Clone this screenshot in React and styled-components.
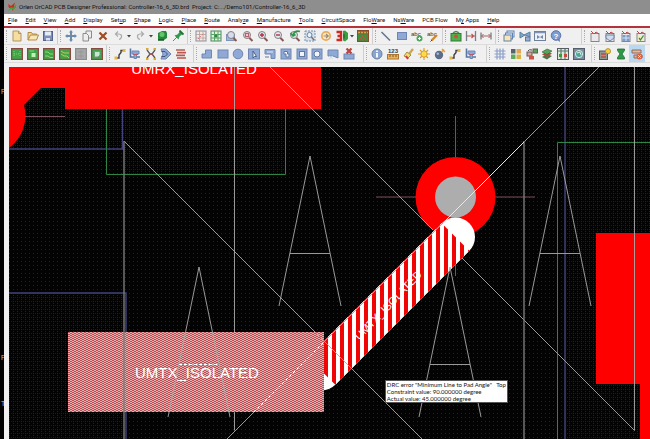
import styled, { createGlobalStyle, css } from "styled-components";

const GlobalStyle = createGlobalStyle`
  * {
    box-sizing: border-box;
  }

  body {
    margin: 0;
    background: #000;
    font-family: Roboto, "Open Sans", sans-serif;
  }
`;

const menus = [
  ["", "F", "ile"],
  ["", "E", "dit"],
  ["", "V", "iew"],
  ["", "A", "dd"],
  ["", "D", "isplay"],
  ["Set", "u", "p"],
  ["", "S", "hape"],
  ["", "L", "ogic"],
  ["", "P", "lace"],
  ["", "R", "oute"],
  ["Analy", "z", "e"],
  ["", "M", "anufacture"],
  ["", "T", "ools"],
  ["", "C", "ircuitSpace"],
  ["Flo", "W", "are"],
  ["Ns", "W", "are"],
  ["PCB Flow", "", ""],
  ["M", "y", " Apps"],
  ["", "H", "elp"],
];

// Icon building blocks, all drawn on a 12x12 grid
const Lens = ({ tint = "#dfe6ee", children }) => (
  <>
    <path d="M7 7.5 L10.5 11" stroke="#8a5a52" strokeWidth="2" />
    <circle cx="5" cy="5" r="3.5" fill={tint} stroke="#84808c" />
    {children}
  </>
);

const Board = ({ fill = "#3fa548", edge = "#8a4a44", children }) => (
  <>
    <rect x="0.5" y="0.5" width="11" height="11" fill={fill} stroke={edge} strokeWidth="1.4" />
    {children}
  </>
);

const Clip = ({ children }) => (
  <>
    <rect x="2" y="3.5" width="8" height="8" fill="#e9e9ec" stroke="#85858c" />
    <path d="M2 1 L5 4 L7 2 L10 4" fill="none" stroke="#b9484a" />
    {children}
  </>
);

const blue = { fill: "#8fa9d6", stroke: "#6f86b3" };

const icons = {
  new: (
    <path d="M2 1 H7.5 L10 3.5 V11 H2 Z M7.5 1 V3.5 H10" fill="#f6dda0" stroke="#b39661" />
  ),
  open: (
    <>
      <path d="M1 10 V2.5 H4.5 L5.5 4 H9.5 V5" fill="#f3d795" stroke="#b08b4a" />
      <path d="M1 10 L3.5 5 H11.5 L9.5 10 Z" fill="#fae7b5" stroke="#b08b4a" />
    </>
  ),
  save: (
    <>
      <rect x="1.5" y="1.5" width="9" height="9" fill="#7e8fb5" stroke="#55648a" />
      <rect x="3" y="1.5" width="6" height="4" fill="#e4ebf6" />
      <rect x="4" y="8" width="4" height="2.5" fill="#dbe1ec" />
    </>
  ),
  move: (
    <path
      d="M6 0 L8 2.5 H7 V5 H9.5 V4 L12 6 L9.5 8 V7 H7 V9.5 H8 L6 12 L4 9.5 H5 V7 H2.5 V8 L0 6 L2.5 4 V5 H5 V2.5 H4 Z"
      fill="#6d8aa8"
    />
  ),
  copy: (
    <g fill="#eeeeee" stroke="#8b8b8b">
      <path d="M5 1 H10.5 V8 H5 Z" />
      <path d="M2 3.5 H5.5 L7.5 5.5 V11 H2 Z" />
    </g>
  ),
  remove: <path d="M2.5 2.5 L9.5 9.5 M9.5 2.5 L2.5 9.5" stroke="#a04b22" strokeWidth="2.2" />,
  undo: <path d="M3 4 H6 Q9 4.5 8.5 7 Q8 9 6 9.5 M5 1.5 L2.5 4 L5 6.5" fill="none" stroke="#aaa" strokeWidth="1.2" />,
  redo: <path d="M9 4 H6 Q3 4.5 3.5 7 Q4 9 6 9.5 M7 1.5 L9.5 4 L7 6.5" fill="none" stroke="#aaa" strokeWidth="1.2" />,
  via: (
    <>
      <path d="M2 3 L6 1 H10 L11 3 V8 L8 10 H2 Z" fill="#28883b" />
      <circle cx="6" cy="4.5" r="2.5" fill="#64c46a" />
      <path d="M2 10 H8" stroke="#125a23" strokeWidth="1.5" />
    </>
  ),
  pin: (
    <>
      <path d="M1 11 L5 7" stroke="#777" />
      <path d="M2.5 5.5 L6.5 9.5 L7.5 6.5 L10.5 4 L8 1.5 L5.5 4.5 Z" fill="#2f9a4b" />
      <path d="M7.5 0.5 L11.5 4.5" stroke="#1e6e35" strokeWidth="1.8" />
    </>
  ),
  gridRed: (
    <>
      <rect x="1" y="1" width="10" height="10" fill="#f3e9e6" stroke="#8d8d98" />
      <path d="M1 4.5 H11 M1 8 H11 M4.5 1 V11 M8 1 V11" stroke="#b49fa2" strokeWidth="0.8" />
      <path d="M3 9 L9 3" stroke="#c97e75" strokeDasharray="1.5 1.5" />
    </>
  ),
  gridGreen: (
    <>
      <rect x="1" y="1" width="10" height="10" fill="#dff0dd" stroke="#4d8a5c" />
      <path d="M1 4.5 H11 M1 8 H11 M4.5 1 V11 M8 1 V11" stroke="#59a268" />
      <circle cx="6" cy="6" r="1.5" fill="#2d8a3d" />
    </>
  ),
  zoomWindow: (
    <>
      <rect x="0.5" y="4.5" width="8" height="6" fill="#9fb7dc" stroke="#7d93bb" />
      <Lens tint="#d5ddea" />
    </>
  ),
  zoomFit: (
    <Lens tint="#e9cdd0">
      <rect x="3.5" y="3.5" width="3" height="3" fill="none" stroke="#b9606b" />
    </Lens>
  ),
  zoomIn: (
    <Lens>
      <path d="M3 5 H7 M5 3 V7" stroke="#b5323a" strokeWidth="1.4" />
    </Lens>
  ),
  zoomOut: (
    <Lens>
      <path d="M3 5 H7" stroke="#b5323a" strokeWidth="1.4" />
    </Lens>
  ),
  zoomPrev: (
    <Lens tint="#d4e5d6">
      <path d="M11 1.5 Q6 0 4 5 M1.5 3 L4 6 L6.5 4.5" fill="none" stroke="#2f9648" strokeWidth="1.7" />
    </Lens>
  ),
  zoomSelect: (
    <>
      <rect x="1" y="1" width="10" height="10" fill="#d5e1ef" stroke="#7790ad" strokeDasharray="2 1" />
      <circle cx="5.5" cy="5" r="2.5" fill="#eef3fa" stroke="#67819f" />
      <path d="M7.5 7 L10 10" stroke="#8a6d60" strokeWidth="1.5" />
    </>
  ),
  refresh: (
    <>
      <circle cx="6" cy="6" r="4.2" fill="#fbe9c6" stroke="#e8ac5c" strokeWidth="1.8" />
      <path d="M3.5 6 H8 M6 4 L8.2 6 L6 8" fill="none" stroke="#9c8a70" strokeWidth="1.2" />
    </>
  ),
  threeD: (
    <>
      <path d="M0.5 2 H5 V10 H0.5 M1.5 6 H5" fill="none" stroke="#cc2a23" strokeWidth="2.4" />
      <path d="M7 1 L9 0.5 L12 3 V9 L9 11.5 L7 10.5 Z" fill="#35a03c" />
      <path d="M8 4 V8.5" stroke="#1d6d2b" strokeWidth="1.4" />
    </>
  ),
  board3d: (
    <>
      <rect x="0.5" y="0.5" width="11" height="11" fill="#7a6a34" stroke="#8a4b2a" />
      <path d="M1 2.5 H11" stroke="#e0a04d" strokeWidth="1.6" strokeDasharray="2 1" />
      <rect x="1" y="4.5" width="10" height="6" fill="#3b9340" />
      <path d="M3 9 L5 6 L7 9 L9 6" stroke="#cc4e3c" fill="none" />
    </>
  ),
  line: <path d="M1.5 2 L10 10.5" stroke="#66788f" strokeWidth="1.6" />,
  rect: <rect x="1.5" y="2.5" width="9" height="7" {...blue} />,
  textAdd: (
    <>
      <text x="0" y="6" fontSize="6" fill="#333">abc</text>
      <circle cx="8.5" cy="8.5" r="3" fill="#4ba65a" />
      <path d="M7 8.5 H10 M8.5 7 V10" stroke="#e8ffe8" />
    </>
  ),
  textEdit: (
    <>
      <text x="0" y="6" fontSize="6" fill="#333">abc</text>
      <path d="M4.5 10.5 L10 5" stroke="#d08a2e" strokeWidth="2.4" />
      <path d="M3.5 11.5 L5 10" stroke="#444" />
    </>
  ),
  element: (
    <>
      <path d="M2.5 4 Q6 -1 9.5 4" fill="none" stroke="#4e8c49" strokeWidth="1.5" />
      <rect x="1" y="3.5" width="10" height="7.5" fill="#4cb24c" stroke="#327a35" />
      <circle cx="6" cy="6.5" r="2" fill="#d94b3f" />
    </>
  ),
  spaceIn: (
    <>
      <path d="M1.5 1 V11 M10.5 1 V11" stroke="#777d86" strokeWidth="1.3" />
      <path d="M2 6 H10 M6.5 4 L8.5 6 L6.5 8" fill="none" stroke="#b9514b" strokeWidth="1.2" />
    </>
  ),
  measure: (
    <>
      <path d="M1 2.5 V9.5 M11 2.5 V9.5" stroke="#777d86" strokeWidth="1.3" />
      <path d="M1.5 6 H10.5 M3.5 4 L1.5 6 L3.5 8 M8.5 4 L10.5 6 L8.5 8" fill="none" stroke="#a66360" />
    </>
  ),
  windows: (
    <g fill="#e9f0fa" stroke="#6280b4">
      <rect x="4" y="1" width="7" height="6" />
      <rect x="2.5" y="3" width="7" height="6" />
      <rect x="1" y="5" width="7" height="6" fill="#f8e7ae" />
    </g>
  ),
  netlist: (
    <>
      <path d="M1 2 L5 5 L11 2 V7 L6 5 L1 8 Z" fill="#7fa7c9" stroke="#5b7fa1" />
      <rect x="6.5" y="7" width="4.5" height="4" fill="#9ab0d2" stroke="#5d76a0" />
    </>
  ),
  frame: (
    <>
      <rect x="0.5" y="1.5" width="11" height="9" fill="#edf1f7" stroke="#6f7f99" />
      <path d="M0.5 2.5 H11.5" stroke="#7d92b5" strokeWidth="1.5" />
      <path d="M3 5 L9 9 V5 L3 9 Z" fill="#7489a8" />
    </>
  ),
  help: (
    <>
      <circle cx="6" cy="5.5" r="4.8" fill="#7d9bd0" stroke="#5874a8" />
      <path d="M7.5 10 L10 12 L9.5 8.5" fill="#5874a8" />
      <text x="6" y="8.5" fontSize="8" fontWeight="700" textAnchor="middle" fill="#fff">?</text>
    </>
  ),
  clip: <Clip />,
  clipBlue: (
    <Clip>
      <path d="M2 5 H10 V8 L6 11 L2 8 Z" fill="#cfdcf0" stroke="#7184a5" />
    </Clip>
  ),
  clipFull: (
    <Clip>
      <rect x="2.5" y="5" width="7" height="6" fill="#7d9bca" />
      <path d="M6 5 V11 M2.5 8 H9.5" stroke="#dce5f3" />
    </Clip>
  ),
  clipCheck: (
    <Clip>
      <rect x="3" y="5" width="6" height="6" fill="#f5ecc4" />
      <path d="M4 8 L5.5 10 L8.5 5.5" fill="none" stroke="#3a8b45" strokeWidth="1.3" />
    </Clip>
  ),
  boardA: (
    <Board>
      <path d="M3 3 V9 M9 3 V9 M3 6 H9" stroke="#86d077" strokeDasharray="1 1" />
    </Board>
  ),
  boardB: (
    <Board>
      <rect x="4.5" y="5" width="4" height="4" fill="#c4efb4" />
      <path d="M2.5 3 H7" stroke="#7fd572" />
    </Board>
  ),
  boardC: (
    <Board>
      <path d="M2 4 H5 L7 6 H10 M2 8 H5 L7 9.5 H10" fill="none" stroke="#8fd873" />
    </Board>
  ),
  boardD: (
    <Board>
      <path d="M2 3 L5 5 H10 M2 6 L5 8 H8 L10 10" fill="none" stroke="#cfc45b" />
    </Board>
  ),
  boardOff: (
    <Board fill="#a9a9a9" edge="#8e8e8e">
      <path d="M3 4 H9 M3 8 H9 M6 2 V10" stroke="#979797" />
    </Board>
  ),
  boardE: (
    <Board>
      <path d="M3.5 3.5 H9 V7 L7 9 H3.5 Z" fill="#c9e6d1" stroke="#6a9c7d" />
    </Board>
  ),
  route: (
    <>
      <path d="M2 10 H5 V7 L7 4.5 V2.5 H10" fill="none" stroke="#3f3f44" strokeWidth="1.4" />
      <rect x="0.5" y="8.5" width="3" height="3" fill="#e2b93f" />
      <rect x="8.5" y="1" width="3" height="3" fill="#e2b93f" />
    </>
  ),
  slide: (
    <>
      <path d="M1.5 0.5 V9 H11" fill="none" stroke="#5a74a4" strokeWidth="1.6" />
      <path d="M3 3 H10 V6 H7.5 V10.5 H5 V6 H3 Z" {...blue} />
      <path d="M4 6.5 H9" stroke="#b86068" />
    </>
  ),
  fanout: (
    <>
      <path d="M2 2 L5 6 L2 10 M10 2 L7 6 L10 10 M4 6 H8" fill="none" stroke="#58585e" strokeWidth="1.3" />
      <path d="M1 1 H3.5 M8.5 1 H11 M1 11 H3.5 M8.5 11 H11" stroke="#d9a82f" strokeWidth="2" />
      <path d="M4.5 6 H7.5" stroke="#c94c45" strokeWidth="1.6" />
    </>
  ),
  phase: (
    <>
      <path d="M1 1 H6 L11 6 L6 11 H1 L3 6 Z" {...blue} />
      <path d="M1.5 3.5 H5 L7.5 6 L5 8.5 H1.5" fill="none" stroke="#44537a" />
    </>
  ),
  delay: (
    <path d="M1 2 H10 M2 4.7 H11 M1 7.4 H10 M2 10 H11" stroke="#b8594f" strokeWidth="1.7" />
  ),
  shapePoly: <path d="M1 6 H4.5 V2 H10.5 V10 H1 Z" {...blue} />,
  shapeRect: <rect x="1" y="2" width="10" height="8" {...blue} />,
  shapeCircle: <circle cx="6" cy="6" r="4.8" {...blue} />,
  shapeSelect: (
    <>
      <rect x="0.5" y="1" width="11" height="10" {...blue} />
      <path d="M5 3 V10 L6.5 8.5 L8.5 8.5 Z" fill="#fff" stroke="#4d608a" />
    </>
  ),
  shapeL: (
    <>
      <path d="M1 1.5 H11 V10.5 H7 V6 H1 Z" {...blue} />
      <path d="M3 4 H9" stroke="#e0e9f8" />
      <path d="M1 9 H5" stroke="#64799f" />
    </>
  ),
  shapeVoid: (
    <>
      <rect x="1" y="1" width="10" height="10" {...blue} />
      <path d="M4 3.5 H7.5 V6 H9 V9 H6 V6 H4 Z" fill="#f0f3f8" stroke="#6379a2" />
    </>
  ),
  shapeVoidRect: (
    <>
      <rect x="1" y="1" width="10" height="10" {...blue} />
      <rect x="3.5" y="3.5" width="5" height="5" fill="#f0f3f8" stroke="#6379a2" />
    </>
  ),
  shapeVoidCircle: (
    <>
      <rect x="1" y="1" width="10" height="10" {...blue} />
      <circle cx="6" cy="6" r="3" fill="#f0f3f8" stroke="#6379a2" />
    </>
  ),
  shapeCut: (
    <>
      <path d="M1 2 H11 V10 L6 8 H1 Z" {...blue} />
      <path d="M2 11 L6 8 M2 8 L6 11" stroke="#d6dce8" />
    </>
  ),
  shapeDelete: (
    <>
      <rect x="1" y="6" width="10" height="5" {...blue} />
      <path d="M3.5 0.5 L8.5 5.5 M8.5 0.5 L3.5 5.5" stroke="#b8443c" strokeWidth="2.2" />
    </>
  ),
  info: (
    <>
      <circle cx="6" cy="6" r="5" fill="#8aa5cf" stroke="#68819f" />
      <path d="M6 2.5 V4 M6 5 V9.5" stroke="#fff" strokeWidth="1.8" />
    </>
  ),
  ruler: (
    <>
      <text x="6" y="5" fontSize="6" fontWeight="700" textAnchor="middle" fill="#3c3c3c">123</text>
      <rect x="0.5" y="6.5" width="11" height="4.5" fill="#efb15c" stroke="#a87832" />
      <path d="M3 7 V9 M6 7 V9 M9 7 V9" stroke="#7e5620" />
    </>
  ),
  brush: (
    <>
      <path d="M7 6 L11 1" stroke="#c9a85b" strokeWidth="2.4" />
      <path d="M2 8 L5 4 L9 7 L6 10 Z" fill="#f3dc6b" stroke="#a78d3a" />
      <path d="M4 8 L6 11" stroke="#c93d3d" strokeWidth="2" />
    </>
  ),
  sun: (
    <>
      <path d="M6 0 V12 M0 6 H12 M2 2 L10 10 M10 2 L2 10" stroke="#d79b2b" strokeWidth="1.1" />
      <circle cx="6" cy="6" r="3.2" fill="#ffd94d" stroke="#d79b2b" />
    </>
  ),
  bomb: (
    <>
      <circle cx="5" cy="7" r="4.2" fill="#5d6c88" />
      <circle cx="3.8" cy="5.8" r="1.3" fill="#a9b6cc" />
      <path d="M7.5 4 L10 1.5 M8 1 L11 4" stroke="#e0a136" strokeWidth="1.5" />
    </>
  ),
  mesh: (
    <path d="M0.5 3 H11.5 M0.5 6 H11.5 M0.5 9 H11.5 M3 0.5 V11.5 M6 0.5 V11.5 M9 0.5 V11.5" stroke="#8ba0c8" strokeWidth="1.2" />
  ),
  colors: (
    <>
      <rect x="1" y="1" width="4.5" height="4.5" fill="#566273" />
      <rect x="6.5" y="1" width="4.5" height="4.5" fill="#e0a650" />
      <rect x="1" y="6.5" width="4.5" height="4.5" fill="#5bab5b" />
      <rect x="6.5" y="6.5" width="4.5" height="4.5" fill="#d6b43e" />
    </>
  ),
  swap: (
    <>
      <rect x="7" y="1" width="4.5" height="4" fill="#57a55b" stroke="#695c54" />
      <rect x="1" y="4" width="5" height="4" fill="#d7a59e" stroke="#695c54" />
      <rect x="3" y="8" width="5" height="3.5" fill="#cc5548" />
      <path d="M2 3 Q3 1 6 2" fill="none" stroke="#444" />
    </>
  ),
  layers: (
    <>
      <path d="M1 9 L6 6 L11 8 L6 11.5 Z" fill="#49754a" />
      <path d="M1 6.5 L6 3.5 L11 5.5 L6 9 Z" fill="#ad4a41" />
      <path d="M1 4 L6 1 L11 3 L6 6.5 Z" fill="#56a458" stroke="#2e6131" strokeWidth="0.6" />
    </>
  ),
  constraints: (
    <>
      <rect x="0.5" y="0.5" width="11" height="11" fill="#dce7dc" stroke="#555f66" />
      <path d="M1 3 H11 M4 1 V11 M8 1 V11" stroke="#5d7d66" strokeWidth="1.2" />
      <rect x="2" y="6" width="3" height="3" fill="#399a43" />
      <rect x="7" y="6" width="3" height="3" fill="#c34a3e" />
    </>
  ),
  globe: (
    <>
      <rect x="0.5" y="0.5" width="11" height="11" fill="#7d8a9b" stroke="#535e6b" />
      <circle cx="6" cy="6" r="3.6" fill="#48a8a0" stroke="#d4ecee" />
      <path d="M4 5 L7 4 L8 7" fill="none" stroke="#d7f0d2" />
    </>
  ),
  report: (
    <>
      <rect x="0.5" y="3" width="8" height="8.5" fill="#8f9993" stroke="#555" />
      <path d="M2 6 H7 M2 9 H7" stroke="#c84b40" strokeWidth="1.4" />
      <circle cx="9" cy="3.2" r="2.6" fill="#f4cf3a" stroke="#a9862b" strokeWidth="0.8" />
    </>
  ),
  hourglass: (
    <path d="M2.5 1 H9.5 V2.5 L7 6 L9.5 9.5 V11 H2.5 V9.5 L5 6 L2.5 2.5 Z" fill="#2f9a45" stroke="#1c6a30" strokeWidth="0.8" />
  ),
  drc: (
    <>
      <path d="M1 2 H10 V5 H1 Z M3 7 H11 V10 H3 Z" fill="#e5b79b" stroke="#8e6a5d" />
      <circle cx="8.5" cy="8.5" r="3" fill="#e0603e" />
      <path d="M7.3 7.3 L9.7 9.7 M9.7 7.3 L7.3 9.7" stroke="#ffe9df" />
    </>
  ),
};

const toolbars = [
  {
    name: "Standard",
    groups: [
      { size: 54, items: ["new", "open", "save"] },
      { size: 130, items: ["move", "copy", "remove", "undo", "|", "redo", "|", "via", "pin"] },
      {
        size: 185,
        items: ["gridRed", "gridGreen", "zoomWindow", "zoomFit", "zoomIn", "zoomOut", "zoomPrev", "zoomSelect", "refresh", "threeD", "|", "board3d"],
      },
      { size: 70, items: ["line", "rect", "textAdd", "textEdit"] },
      { size: 53, items: ["element", "spaceIn", "measure"] },
      { size: 86, tail: 17, items: ["windows", "netlist", "frame", "help"] },
      { size: 68, items: ["clip", "clipBlue", "clipFull", "clipCheck"] },
    ],
  },
  {
    name: "Layout",
    groups: [
      { size: 103, items: ["boardA", "boardB", "boardC", "boardD", "boardOff", "boardE"] },
      { size: 87, tail: 4, items: ["route", "slide", "fanout", "phase", "delay"] },
      {
        size: 170,
        tail: 6,
        items: ["shapePoly", "shapeRect", "shapeCircle", "shapeSelect", "shapeL", "shapeVoid", "shapeVoidRect", "shapeVoidCircle", "shapeCut", "shapeDelete"],
      },
      { size: 123, tail: 7, items: ["info", "ruler", "brush", "sun", "bomb", "route", "slide"] },
      { size: 105, tail: 4, items: ["mesh", "colors", "swap", "layers", "constraints", "globe"] },
      { size: 58, tail: 5, items: ["report", "hourglass", "drc"] },
    ],
  },
];

// Large "A" outlines: apex of each one
const letters = [
  [310, 156],
  [199, 267],
  [450, 267],
  [560, 156],
];

const Letter = ({ x, y }) => (
  <path d={`M${x - 31} ${y + 150} L${x} ${y} L${x + 31} ${y + 150} M${x - 20} ${y + 97.5} H${x + 20}`} />
);

const BoardView = () => (
  <Drawing viewBox="9 67 641 372" role="img" aria-label="Board layout">
    <defs>
      <pattern id="dots" width="4" height="4" patternUnits="userSpaceOnUse">
        <rect width="4" height="4" fill="#020302" />
        <rect x="1" y="1" width="1" height="1" fill="#1d261e" />
      </pattern>
      <pattern id="mesh" width="4" height="4" patternUnits="userSpaceOnUse">
        <rect x="3" y="1" width="1" height="1" fill="#161e1c" />
        <rect x="1" y="3" width="1" height="1" fill="#1c2426" />
      </pattern>
      <pattern id="hatch" width="4" height="2" patternUnits="userSpaceOnUse">
        <rect width="4" height="2" fill="#e0b0b1" />
        <rect width="2" height="1" fill="#bd4f54" />
        <rect x="2" y="1" width="2" height="1" fill="#bd4f54" />
      </pattern>
      <pattern id="stripes" x="332" width="8" height="8" patternUnits="userSpaceOnUse">
        <rect width="8" height="8" fill="#fff" />
        <rect width="4" height="8" fill="#f00505" />
      </pattern>
    </defs>

    <rect x="9" y="67" width="641" height="372" fill="url(#dots)" />
    <g fill="url(#mesh)">
      <rect x="9" y="88" width="114" height="61" />
      <rect x="123" y="109" width="163" height="65" />
      <rect x="9" y="293" width="117" height="146" />
      <rect x="565" y="67" width="85" height="372" />
    </g>

    <g fill="none" stroke="#42427c" strokeWidth="1.4">
      <path d="M9 149 H122.5 V109" />
      <path d="M9 293 H126 V439" />
      <path d="M565 67 V439" />
    </g>
    <g fill="none" stroke="#2f8443">
      <path d="M106.5 109 V174.5 H285.5 V109" />
      <path d="M650 142.5 H557.5 V439" />
    </g>

    {/* copper */}
    <g fill="#fe0000">
      <path d="M9 67 H321 V109 H65 V88 H41 L24 105 A40 40 0 0 1 9 148 Z" />
      <path d="M596 233 H650 V439 H640 V384 H596 Z" />
    </g>
    <path d="M25 116.5 H65 M376 197 H535 M455.5 116 V276" stroke="#7a4f5f" />
    <circle cx="455.5" cy="197" r="40" fill="#fe0000" />
    <circle cx="455.5" cy="197" r="20.5" fill="#adadad" />

    {/* trace */}
    <path d="M455.5 237 L321.5 371" stroke="#fff" strokeWidth="39" strokeLinecap="round" />
    <path d="M441.7 223.2 L469.3 250.8 L335.3 384.8 L307.7 357.2 Z" fill="url(#stripes)" />
    <rect x="68" y="332" width="256" height="80" fill="url(#hatch)" />

    <g fill="none" stroke="#a9a9a9" strokeWidth="0.9">
      <path d="M124 141 L422 439" />
      <path d="M270 67 L433 230 M462 258 L634.5 430.5 V67" />
      <path d="M227 439 L254 412 M324 342 L599 67" />
      <path d="M234.5 67 V332 M234.5 412 V430.5" />
      <path d="M124 141 V439 M524 141 V439" stroke="#7c7c7c" strokeWidth="1.4" />
      {letters.map(([x, y]) => (
        <Letter key={`${x}-${y}`} x={x} y={y} />
      ))}
    </g>
    <path d="M254 412 L324 342 M179 364.5 H219" stroke="#fff" strokeDasharray="3 2" />
    <path d="M443 223 L524 142" stroke="#e8e8e8" />

    <g fill="#fff" fontSize="15" textAnchor="middle" fontFamily='"Liberation Sans", Arial, sans-serif'>
      <text x="194" y="74">UMRX_ISOLATED</text>
      <text x="197" y="378">UMTX_ISOLATED</text>
      <text transform="translate(391 308) rotate(-46)" fontSize="11">UMTX_ISOLATED</text>
    </g>
  </Drawing>
);

const ToolGroup = ({ group }) => (
  <Group $size={group.size} $tail={group.tail}>
    {group.items.map((item, i) =>
      item === "|" ? (
        <DropButton key={i} type="button" aria-label="More options">
          <svg width="4" height="3" viewBox="0 0 4 3">
            <path d="M0 0 H4 L2 2.5 Z" fill="#444" />
          </svg>
        </DropButton>
      ) : (
        <ToolButton key={i} type="button" aria-label={item} $active={item === "drc"}>
          <svg width="12" height="12" viewBox="0 0 12 12">
            {icons[item]}
          </svg>
        </ToolButton>
      )
    )}
  </Group>
);

const App = () => (
  <Desktop>
    <GlobalStyle />
    <Edge>
      <span>P</span>
      <span>F</span>
      <span>T</span>
    </Edge>
    <Window>
      <TitleBar>
        <svg width="10" height="10" viewBox="0 0 10 10">
          <path d="M1 2 L4 4 L8 0.5 L7 4 L9 5 L5 9 L5 6 L2 6 Z" fill="#c92d22" />
          <path d="M1 9 L4 5 L6 6 L9 2 L9 5 L6 8 L4 7 Z" fill="#3fa63c" />
        </svg>
        <Title>{"Orlen OrCAD PCB Designer Professional: Controller-16_6_3D.brd  Project: C:.../Demo101/Controller-16_6_3D"}</Title>
      </TitleBar>
      <MenuBar>
        {menus.map(([before, key, after]) => (
          <MenuItem key={before + key + after} type="button">
            {before}
            {key && <u>{key}</u>}
            {after}
          </MenuItem>
        ))}
      </MenuBar>
      {toolbars.map((bar) => (
        <Toolbar key={bar.name} role="toolbar" aria-label={bar.name}>
          {bar.groups.map((group, i) => (
            <ToolGroup key={i} group={group} />
          ))}
        </Toolbar>
      ))}
      <Canvas>
        <BoardView />
        <Tooltip role="tooltip">
          <p>{'DRC error "Minimum Line to Pad Angle"   Top'}</p>
          <p>Constraint value: 90.000000 degree</p>
          <p>Actual value: 45.000000 degree</p>
        </Tooltip>
      </Canvas>
    </Window>
  </Desktop>
);

const Desktop = styled.div`
  display: flex;
  min-height: 100vh;
  background: #000;
`;

// Sliver of the window that lies behind
const Edge = styled.aside`
  flex: 0 0 4px;
  display: grid;
  grid-template-rows: 266fr 46fr 39fr;
  padding: 88px 0 0 1px;
  overflow: hidden;
  color: #bbb;
  font-size: 7px;
  line-height: 8px;
`;

const Window = styled.main`
  flex: 1;
  min-width: 0;
  display: flex;
  flex-direction: column;
  background: #f0f0f0;
`;

const TitleBar = styled.header`
  display: flex;
  align-items: center;
  gap: 2px;
  height: 14px;
  padding-left: 3px;
  background: #8e8e8e;
`;

const Title = styled.h1`
  margin: 0;
  font-size: 6px;
  font-weight: 400;
  line-height: 12px;
  white-space: pre;
  color: #111;
`;

const MenuBar = styled.nav`
  display: flex;
  height: 14px;
  background: #fff;
  border-bottom: 2px solid #b5323a;
`;

const MenuItem = styled.button`
  border: 0;
  padding: 0 4px;
  background: none;
  font-family: inherit;
  font-size: 6px;
  line-height: 12px;
  white-space: nowrap;
  color: #111;
`;

const Toolbar = styled.div`
  display: flex;
  height: 17px;
  border-bottom: 1px solid #dcdcdc;

  & + & {
    height: 18px;
  }
`;

const Group = styled.div`
  flex: ${({ $size }) => `${$size} 1 ${$size}px`};
  min-width: 0;
  display: flex;
  align-items: stretch;
  padding-right: ${({ $tail }) => $tail || 1}px;
  border-right: 1px solid #cfcfcf;

  &::before {
    content: "";
    width: 1px;
    margin: 2px 1px 2px 2px;
    border-left: 1px dotted #a9a9a9;
  }

  &:last-child {
    border-right: 0;
  }
`;

const buttonBase = css`
  display: flex;
  align-items: center;
  justify-content: center;
  min-width: 0;
  border: 0;
  padding: 0;
  background: none;

  svg {
    flex: none;
  }
`;

const ToolButton = styled.button`
  ${buttonBase}
  flex: 16 1 0;
  background: ${({ $active }) => ($active ? "#b9d8f2" : "none")};
`;

const DropButton = styled.button`
  ${buttonBase}
  flex: 6 1 0;
`;

const Canvas = styled.section`
  position: relative;
  flex: 1;
  padding: 4px 0 0 5px;
`;

const Drawing = styled.svg`
  display: block;
  width: 100%;
  height: auto;
`;

const Tooltip = styled.div`
  position: absolute;
  right: 22%;
  bottom: 36px;
  padding: 0 1px;
  border: 1px solid #555;
  background: #fff;
  color: #111;
  font-family: Lato, "Liberation Sans", sans-serif;
  font-size: 6px;
  line-height: 7px;
  white-space: pre;

  p {
    margin: 0;
  }
`;

export default App;
